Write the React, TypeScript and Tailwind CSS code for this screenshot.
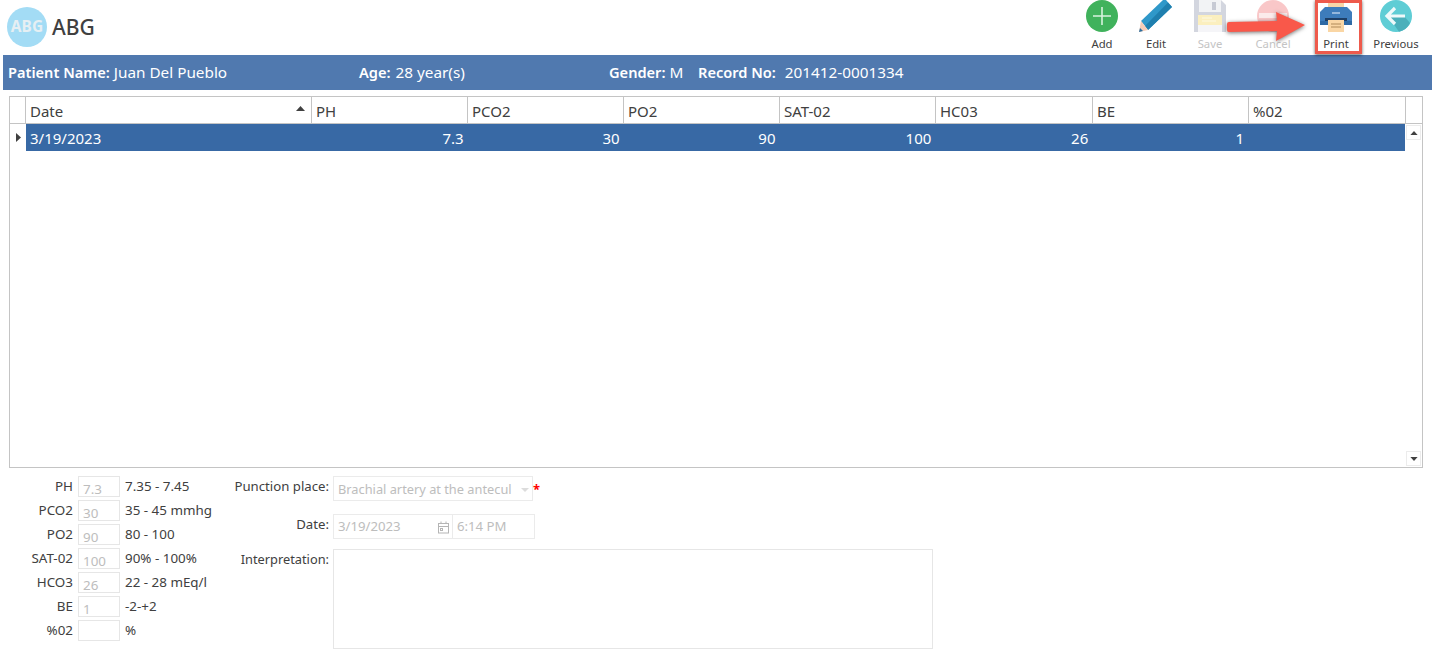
const FONT = "font-['Noto_Sans','Open_Sans',sans-serif]";

const COLS = [
  { name: "PH", value: "7.3", w: "w-[156px]" },
  { name: "PCO2", value: "30", w: "w-[156px]" },
  { name: "PO2", value: "90", w: "w-[156px]" },
  { name: "SAT-02", value: "100", w: "w-[156px]" },
  { name: "HC03", value: "26", w: "w-[157px]" },
  { name: "BE", value: "1", w: "w-[156px]" },
  { name: "%02", value: "", w: "w-[157px]" },
];

const VITALS = [
  { label: "PH", value: "7.3", range: "7.35 - 7.45" },
  { label: "PCO2", value: "30", range: "35 - 45 mmhg" },
  { label: "PO2", value: "90", range: "80 - 100" },
  { label: "SAT-02", value: "100", range: "90% - 100%" },
  { label: "HCO3", value: "26", range: "22 - 28 mEq/l" },
  { label: "BE", value: "1", range: "-2-+2" },
  { label: "%02", value: "", range: "%" },
];

function AddIcon() {
  return (
    <svg width="32" height="32" viewBox="0 0 32 32">
      <circle cx="16" cy="16" r="16" fill="#40b25c" />
      <path d="M16 7v18M7 16h18" stroke="#d8f2de" strokeWidth="1.6" />
    </svg>
  );
}

function EditIcon() {
  return (
    <svg width="34" height="32" viewBox="0 0 34 32">
      <path d="M2 21 24 0h3l6 7L9 30z" fill="#2f98c9" />
      <path d="M6 26 29 2.5 33 7 9 30z" fill="#1f7fae" />
      <path d="M2 21l7 9-9 2z" fill="#f6cdb8" />
      <path d="M0 32l1-4 3 3z" fill="#2b6f9f" />
    </svg>
  );
}

function SaveIcon() {
  return (
    <svg width="32" height="32" viewBox="0 0 32 32">
      <path d="M0 0h27l5 5v27H0z" fill="#cfd2dc" />
      <rect x="5" y="0" width="22" height="12" fill="#f1f2f5" />
      <rect x="18" y="2" width="4" height="8" fill="#c2c5d0" />
      <rect x="4" y="15" width="24" height="10" fill="#fbeeb9" />
      <rect x="4" y="25" width="24" height="7" fill="#f4f5f8" />
      <path d="M8 18h10M8 21h14" stroke="#fdf8e2" strokeWidth="1.2" />
    </svg>
  );
}

function CancelIcon() {
  return (
    <svg width="32" height="32" viewBox="0 0 32 32">
      <circle cx="16" cy="16" r="16" fill="#f9c2c3" />
      <rect x="2" y="13" width="28" height="5" fill="#fbe9e9" />
    </svg>
  );
}

function PrintIcon() {
  return (
    <svg width="32" height="32" viewBox="0 0 32 32">
      <rect x="8" y="3" width="16" height="6" fill="#f7d6a8" />
      <path d="M5 7h22l5 5v13H0V12z" fill="#3d7cbb" />
      <path d="M0 21h32v4H0z" fill="#2f6aa5" />
      <rect x="5" y="18" width="22" height="3" fill="#1e3f66" />
      <rect x="8" y="20" width="16" height="12" fill="#fad6a4" />
      <path d="M11 24h10M11 27h10" stroke="#b08a58" strokeWidth="1" />
      <path d="M12 13h8" stroke="#cfe0f2" strokeWidth="1.2" />
    </svg>
  );
}

function PreviousIcon() {
  return (
    <svg width="32" height="32" viewBox="0 0 32 32">
      <circle cx="16" cy="16" r="16" fill="#5fcdd5" />
      <path d="M8 16l16 0 6 7A16 16 0 0 1 19 31.7z" fill="#4bb0bb" />
      <path d="M15 8l-8 8 8 8M8 16h17" fill="none" stroke="#eef9fa" strokeWidth="3.2" />
    </svg>
  );
}

const TOOLS = [
  { label: "Add", w: "w-[54px]", icon: <AddIcon />, off: false },
  { label: "Edit", w: "w-[54px]", icon: <EditIcon />, off: false },
  { label: "Save", w: "w-[54px]", icon: <SaveIcon />, off: true },
  { label: "Cancel", w: "w-[72px]", icon: <CancelIcon />, off: true },
  { label: "Print", w: "w-[54px]", icon: <PrintIcon />, off: false },
  { label: "Previous", w: "w-[66px]", icon: <PreviousIcon />, off: false },
];

function Caret({ down = false }: { down?: boolean }) {
  return (
    <svg width="8" height="4" viewBox="0 0 9 5" className={down ? "rotate-180" : ""}>
      <path d="M0 5 4.5 0 9 5z" fill="#404040" />
    </svg>
  );
}

function Callout() {
  return (
    <>
      <div className="absolute left-[1315px] top-0 h-[54px] w-[47px] border-[3px] border-[#ee5a4c] shadow-[0_1px_3px_rgba(0,0,0,0.6)]" />
      <svg width="84" height="34" viewBox="0 0 84 34" className="absolute left-[1225px] top-[10px] drop-shadow-[0_1px_2px_rgba(0,0,0,0.55)]">
        <path d="M2 14 Q2 12 4 12 L52 11 L51 2 L80 15 L51 31 L52 21 L4 22 Q2 22 2 20z" fill="#f9584a" />
      </svg>
    </>
  );
}

export default function App() {
  return (
    <div className={`relative h-[659px] w-[1432px] overflow-hidden bg-white text-[#404040] ${FONT}`}>
      <header className="flex h-[55px] items-start justify-between pr-[3px]">
        <div className="flex items-center pl-[7px] pt-[5px]">
          <div className="flex h-10 w-10 items-center justify-center rounded-full bg-[#a3dcf5] text-[15.5px] font-bold text-[#e6eff3]">ABG</div>
          <span className="ml-[5px] text-[21px] font-medium leading-[44px] text-[#404040]">ABG</span>
        </div>
        <div className="flex">
          {TOOLS.map((t) => (
            <div key={t.label} className={`flex ${t.w} flex-col items-center`}>
              <div className={`flex h-[32px] items-start ${t.off ? "opacity-90" : ""}`}>{t.icon}</div>
              <span className={`mt-[3px] text-[11.3px] leading-[18px] ${t.off ? "text-[#c4c4c4]" : "text-[#404040]"}`}>{t.label}</span>
            </div>
          ))}
        </div>
      </header>
      <Callout />

      <div className="ml-[3px] flex h-[35px] items-center bg-[#5079af] pl-[5px] text-[15.3px] text-white">
        <div className="w-[351px]"><b className="text-[14.6px] font-semibold">Patient Name:</b> Juan Del Pueblo</div>
        <div className="w-[250px]"><b className="text-[14.6px] font-semibold">Age:</b> <span className="ml-[1px]">28 year(s)</span></div>
        <div className="w-[89px]"><b className="text-[14.6px] font-semibold">Gender:</b> M</div>
        <div><b className="text-[14.6px] font-semibold">Record No:</b> <span className="ml-[5px]">201412-0001334</span></div>
      </div>

      <div className="ml-[9px] mt-[6px] flex h-[372px] w-[1414px] flex-col border border-[#c4c4c4]">
        <div className="flex h-[27px] shrink-0 border-b border-[#c4c4c4] text-[15px] leading-[28px]">
          <div className="w-[16px] border-r border-[#c4c4c4]" />
          <div className="flex w-[286px] justify-between border-r border-[#c4c4c4] pl-[4px] pr-[6px]">
            <span>Date</span>
            <span className="flex pt-[9px]"><svg width="9" height="5" viewBox="0 0 9 5"><path d="M0 5 4.5 0 9 5z" fill="#404040" /></svg></span>
          </div>
          {COLS.map((c) => (
            <div key={c.name} className={`${c.w} border-r border-[#c4c4c4] pl-[4px]`}>{c.name}</div>
          ))}
        </div>
        <div className="flex min-h-0 flex-1">
          <div className="w-[16px] pl-[6px] pt-[9px]">
            <svg width="5" height="9" viewBox="0 0 5 9"><path d="M0 0l5 4.5L0 9z" fill="#404040" /></svg>
          </div>
          <div className="w-[1379px]">
            <div className="flex h-[27px] bg-[#3869a5] text-[15px] leading-[28px] text-white">
              <div className="w-[286px] pl-[4px]">3/19/2023</div>
              {COLS.map((c) => (
                <div key={c.name} className={`${c.w} pr-[4px] text-right`}>{c.value}</div>
              ))}
            </div>
          </div>
          <div className="flex flex-1 flex-col items-start justify-between pb-[1px] pl-[1px] pt-[1px]">
            <div className="flex h-[15px] w-[15px] items-center justify-center border border-[#ececec]"><Caret /></div>
            <div className="flex h-[15px] w-[15px] items-center justify-center border border-[#ececec]"><Caret down /></div>
          </div>
        </div>
      </div>

      <div className="mt-[8px] flex">
        <div className="flex w-[233px] flex-col gap-[3px] text-[13.4px]">
          {VITALS.map((v) => (
            <div key={v.label} className="flex h-[21px] items-start">
              <div className="w-[73px] text-right leading-[20px]">{v.label}</div>
              <div className="ml-[5px] h-[21px] w-[42px] border border-[#e6e6e6] pl-[4px] pt-[3px] leading-[18px] text-[#bdbdbd]">{v.value}</div>
              <div className="ml-[5px] leading-[20px]">{v.range}</div>
            </div>
          ))}
        </div>
        <div className="flex text-[13.2px]">
          <div className="w-[96px] whitespace-nowrap text-right">
            <div className="h-[20px] leading-[20px]">Punction place:</div>
            <div className="mt-[19px] h-[20px] leading-[18px]">Date:</div>
            <div className="mt-[15px] h-[20px] text-[12.8px] leading-[18px]">Interpretation:</div>
          </div>
          <div className="ml-[4px]">
            <div className="flex items-center">
              <div className="flex h-[25px] w-[200px] items-center justify-between border border-[#ebebeb] pl-[4px] pr-[3px] pt-[2px] text-[12.8px] text-[#bdbdbd]">
                <span className="whitespace-nowrap">Brachial artery at the antecul</span>
                <svg width="8" height="4" viewBox="0 0 8 4"><path d="M0 0h8L4 4z" fill="#dcdcdc" /></svg>
              </div>
              <span className="mt-[2px] text-[13px] font-bold leading-none text-[#f00]">*</span>
            </div>
            <div className="mt-[13px] flex h-[25px]">
              <div className="flex w-[120px] items-center justify-between border border-[#ebebeb] pl-[4px] pr-[2px] pt-[1px] text-[#bdbdbd]">
                <span>3/19/2023</span>
                <svg width="13" height="13" viewBox="0 0 13 13" fill="none" stroke="#b5b5b5"><rect x="1.5" y="2.5" width="10" height="9.5" /><path d="M1.5 5.5h10M4 .5v2M9 .5v2" /><rect x="3.5" y="7.5" width="2" height="2" /></svg>
              </div>
              <div className="flex w-[82px] items-center border border-l-0 border-[#ebebeb] pl-[4px] pt-[1px] text-[#bdbdbd]">6:14 PM</div>
            </div>
            <div className="mt-[10px] h-[100px] w-[600px] border border-[#e6e6e6]" />
          </div>
        </div>
      </div>
    </div>
  );
}
